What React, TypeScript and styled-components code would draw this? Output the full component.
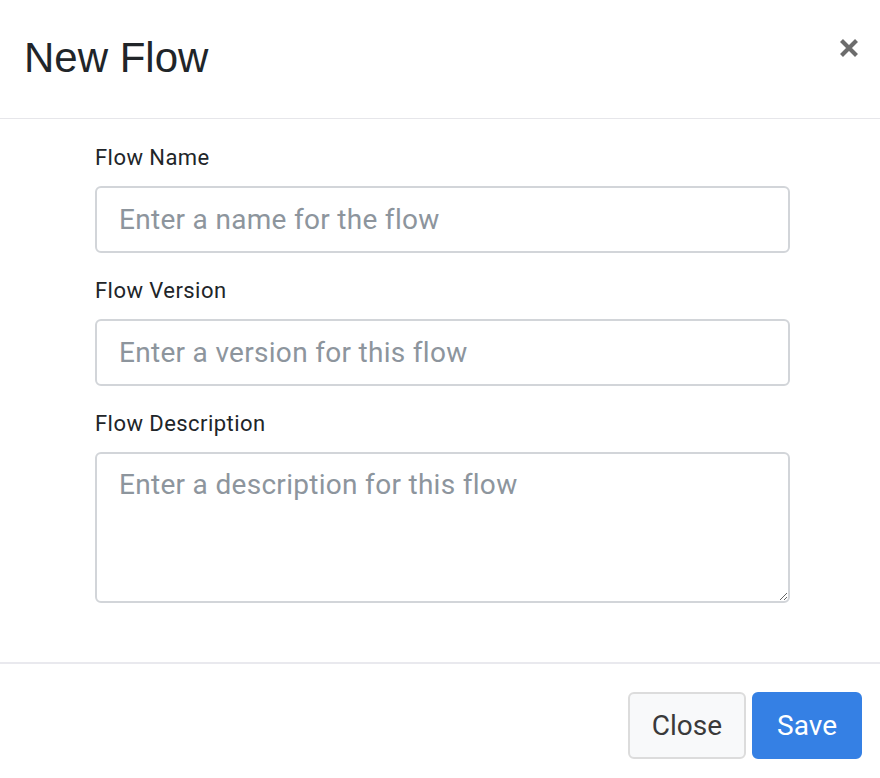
import React from "react";
import styled, { createGlobalStyle } from "styled-components";

const Global = createGlobalStyle`
  html, body { margin: 0; padding: 0; background: #ffffff; }
  body { font-family: Roboto, "Noto Sans", sans-serif; color: #212529; }
  * { box-sizing: border-box; }
`;

const Modal = styled.div`
  width: 880px;
  height: 778px;
  display: flex;
  flex-direction: column;
  background: #fff;
`;

const Header = styled.header`
  height: 119px;
  display: flex;
  align-items: flex-start;
  justify-content: space-between;
  padding: 30px 21px 0 24px;
  border-bottom: 1px solid #e6e6ea;
`;

const Title = styled.h1`
  margin: 0;
  font-family: "Liberation Sans", Arial, sans-serif;
  font-size: 42px;
  font-weight: 400;
  line-height: 56px;
  color: #212529;
`;

const CloseX = styled.button`
  border: 0;
  background: transparent;
  padding: 0;
  margin-top: 8px;
  width: 20px;
  height: 20px;
  display: flex;
  align-items: center;
  justify-content: center;
  cursor: pointer;
`;

const Body = styled.div`
  flex: 1;
  padding: 25px 90px 0 95px;
  display: flex;
  flex-direction: column;
`;

const Field = styled.div`
  display: flex;
  flex-direction: column;
  margin-bottom: 24px;
`;

const Label = styled.label`
  font-size: 22px;
  letter-spacing: 0.45px;
  line-height: 28px;
  color: #212529;
  margin-bottom: 14px;
`;

const Input = styled.input`
  height: 67px;
  width: 695px;
  border: 2px solid #d2d5d9;
  border-radius: 6px;
  padding: 0 22px;
  font-family: Roboto, sans-serif;
  font-size: 28px;
  letter-spacing: 0.3px;
  color: #212529;
  outline: none;
  &::placeholder { color: #8d959d; }
`;

const TextArea = styled.textarea`
  height: 151px;
  width: 695px;
  border: 2px solid #d2d5d9;
  border-radius: 6px;
  padding: 11px 22px;
  font-family: Roboto, sans-serif;
  font-size: 28px;
  letter-spacing: 0.3px;
  line-height: 40px;
  color: #212529;
  outline: none;
  resize: vertical;
  &::placeholder { color: #8d959d; }
`;

const Footer = styled.footer`
  height: 116px;
  border-top: 2px solid #e9e9ee;
  display: flex;
  align-items: flex-start;
  justify-content: flex-end;
  gap: 6px;
  padding: 28px 18px 0 0;
`;

const Button = styled.button<{ $primary?: boolean }>`
  height: 67px;
  padding: 0 ${(p) => (p.$primary ? "23px" : "22px")};
  border-radius: 6px;
  font-family: Roboto, sans-serif;
  font-size: 28px;
  cursor: pointer;
  border: 2px solid ${(p) => (p.$primary ? "#3580e4" : "#dcdcdc")};
  background: ${(p) => (p.$primary ? "#3580e4" : "#f8f9fa")};
  color: ${(p) => (p.$primary ? "#ffffff" : "#3a3a3a")};
`;

export default function App() {
  return (
    <>
      <Global />
      <Modal>
        <Header>
          <Title>New Flow</Title>
          <CloseX aria-label="Close">
            <svg width="20" height="20" viewBox="0 0 20 20">
              <path d="M2.5 2.5 L17.5 17.5 M17.5 2.5 L2.5 17.5" stroke="#6c6c6c" strokeWidth="4.2" strokeLinecap="butt" />
            </svg>
          </CloseX>
        </Header>
        <Body>
          <Field>
            <Label>Flow Name</Label>
            <Input placeholder="Enter a name for the flow" />
          </Field>
          <Field>
            <Label>Flow Version</Label>
            <Input placeholder="Enter a version for this flow" />
          </Field>
          <Field>
            <Label>Flow Description</Label>
            <TextArea placeholder="Enter a description for this flow" />
          </Field>
        </Body>
        <Footer>
          <Button>Close</Button>
          <Button $primary>Save</Button>
        </Footer>
      </Modal>
    </>
  );
}
